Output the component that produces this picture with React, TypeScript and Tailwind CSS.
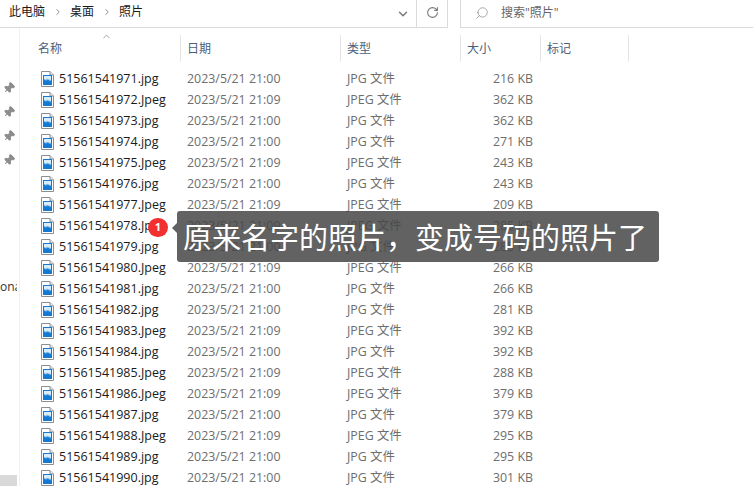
import { ChevronDown, RotateCw, Search, Pin, ChevronRight, ChevronUp } from "lucide-react";

const files: [string, string, string, string][] = [
  ["51561541971", "jpg", "21:00", "216"],
  ["51561541972", "Jpeg", "21:09", "362"],
  ["51561541973", "jpg", "21:00", "362"],
  ["51561541974", "jpg", "21:00", "271"],
  ["51561541975", "Jpeg", "21:09", "243"],
  ["51561541976", "jpg", "21:00", "243"],
  ["51561541977", "Jpeg", "21:09", "209"],
  ["51561541978", "Jpeg", "21:09", "285"],
  ["51561541979", "jpg", "21:00", "285"],
  ["51561541980", "Jpeg", "21:09", "266"],
  ["51561541981", "jpg", "21:00", "266"],
  ["51561541982", "jpg", "21:00", "281"],
  ["51561541983", "Jpeg", "21:09", "392"],
  ["51561541984", "jpg", "21:00", "392"],
  ["51561541985", "Jpeg", "21:09", "288"],
  ["51561541986", "Jpeg", "21:09", "379"],
  ["51561541987", "jpg", "21:00", "379"],
  ["51561541988", "Jpeg", "21:09", "295"],
  ["51561541989", "jpg", "21:00", "295"],
  ["51561541990", "jpg", "21:00", "301"],
];

const FileIcon = () => (
  <svg width="13" height="16" viewBox="0 0 13 16" className="shrink-0">
    <path d="M0.5 0.5H9L12.5 4V15.5H0.5Z" fill="#fff" stroke="#8a8f96" />
    <path d="M9 0.5V4H12.5" fill="#e8e8e8" stroke="#8a8f96" />
    <rect x="2" y="4" width="9" height="10" fill="#1479d2" />
    <path d="M3 5H10V8.5L9 10.5L8 8L7 9.5L6 7.5L5 10L4 8L3 9Z" fill="#d9eefc" />
  </svg>
);

const Header = ({ label, w, pl }: { label: string; w: string; pl: string }) => (
  <div className={`${w} ${pl} h-[27px] flex items-center border-r border-[#e5e5e5] text-[#4c607a]`}>{label}</div>
);

export default function App() {
  return (
    <div className="relative w-[753px] h-[486px] overflow-hidden bg-white text-[12px] font-['Open_Sans','Noto_Sans_CJK_SC',sans-serif]">
      {/* address bar */}
      <div className="flex h-[28px] items-stretch">
        <div className="w-[417px] shrink-0 flex items-center pl-[9px] gap-[7.5px] border-b border-[#d9d9d9] text-[#1a1a1a] -mt-[3px]">
          <span>此电脑</span>
          <ChevronRight size={10} strokeWidth={2} className="text-[#7a7a7a]" />
          <span>桌面</span>
          <ChevronRight size={10} strokeWidth={2} className="text-[#7a7a7a]" />
          <span>照片</span>
          <ChevronDown size={14} strokeWidth={2.5} className="ml-auto mr-[7px] text-[#7a7a7a] mt-[3px]" />
        </div>
        <div className="w-[32px] shrink-0 -ml-[1px] pb-[2px] flex items-center justify-center border-x border-b border-[#d9d9d9]">
          <RotateCw size={13} className="text-[#7a7a7a]" />
        </div>
        <div className="w-[12px] shrink-0" />
        <div className="flex-1 flex items-center border-l border-b border-[#d9d9d9] pl-[14px] pb-[2px] text-[#666]">
          <Search size={14} strokeWidth={1.25} className="-scale-x-100 text-[#8a8a8a]" />
          <span className="ml-[12px]">搜索"照片"</span>
        </div>
      </div>

      <div className="flex">
        {/* nav pane strip */}
        <div className="relative w-[20px] h-[458px] border-r border-[#f0f0f0] shrink-0 flex flex-col items-center pt-[54px] gap-[12px] text-[#8c8c8c]">
          {[0, 1, 2, 3].map((i) => (
            <Pin key={i} size={12} fill="currentColor" className="rotate-45 -ml-[2px]" />
          ))}
          <span className="absolute left-0 top-[251px] w-[17px] overflow-hidden text-right text-[#333] leading-[16px]">ona</span>
          <div className="absolute left-0 bottom-0 w-[17px] h-[11px] bg-[#d9d9d9]" />
        </div>

        {/* file list */}
        <div className="relative flex-1">
          <ChevronUp size={11} strokeWidth={1.5} className="absolute left-[81px] top-[3px] text-[#7a7a7a]" />
          <div className="flex mt-[7px] mb-[6px]">
            <Header label="名称" w="w-[161px]" pl="pl-[18px]" />
            <Header label="日期" w="w-[160px]" pl="pl-[6px]" />
            <Header label="类型" w="w-[120px]" pl="pl-[6px]" />
            <Header label="大小" w="w-[80px]" pl="pl-[6px]" />
            <Header label="标记" w="w-[88px]" pl="pl-[6px]" />
          </div>
          <div className="flex flex-col text-[#6d6d6d] text-[12.4px]">
            {files.map(([name, ext, time, size]) => (
              <div key={name} className="flex items-center h-[21px] whitespace-nowrap">
                <div className="w-[161px] pl-[21px] flex items-center gap-[5px] text-[#1a1a1a] text-[12.5px]">
                  <FileIcon />
                  <span className="pt-[2px]">{name}.{ext}</span>
                </div>
                <div className="w-[160px] pl-[6px] pt-[2px]">2023/5/21 {time}</div>
                <div className="w-[100px] pl-[6px] pt-[2px]">{ext === "jpg" ? "JPG 文件" : "JPEG 文件"}</div>
                <div className="w-[92px] text-right pt-[2px]">{size} KB</div>
              </div>
            ))}
          </div>
        </div>
      </div>

      {/* caption overlay */}
      <div className="absolute left-[177px] top-[211px] w-[482px] h-[51px] rounded-[3px] bg-[rgba(70,70,70,0.85)] flex items-center pl-[6px] text-white text-[29px] whitespace-nowrap font-['Noto_Sans_CJK_SC',sans-serif]">
        原来名字的照片，变成号码的照片了
      </div>
      <div className="absolute left-[172px] top-[223px] w-0 h-0 border-y-[5px] border-y-transparent border-r-[5px] border-r-[rgba(70,70,70,0.85)]" />
      <div className="absolute left-[148px] top-[218px] w-[20px] h-[19px] rounded-full bg-[#f23030] text-white text-[11px] flex items-center justify-center font-bold">1</div>
    </div>
  );
}
